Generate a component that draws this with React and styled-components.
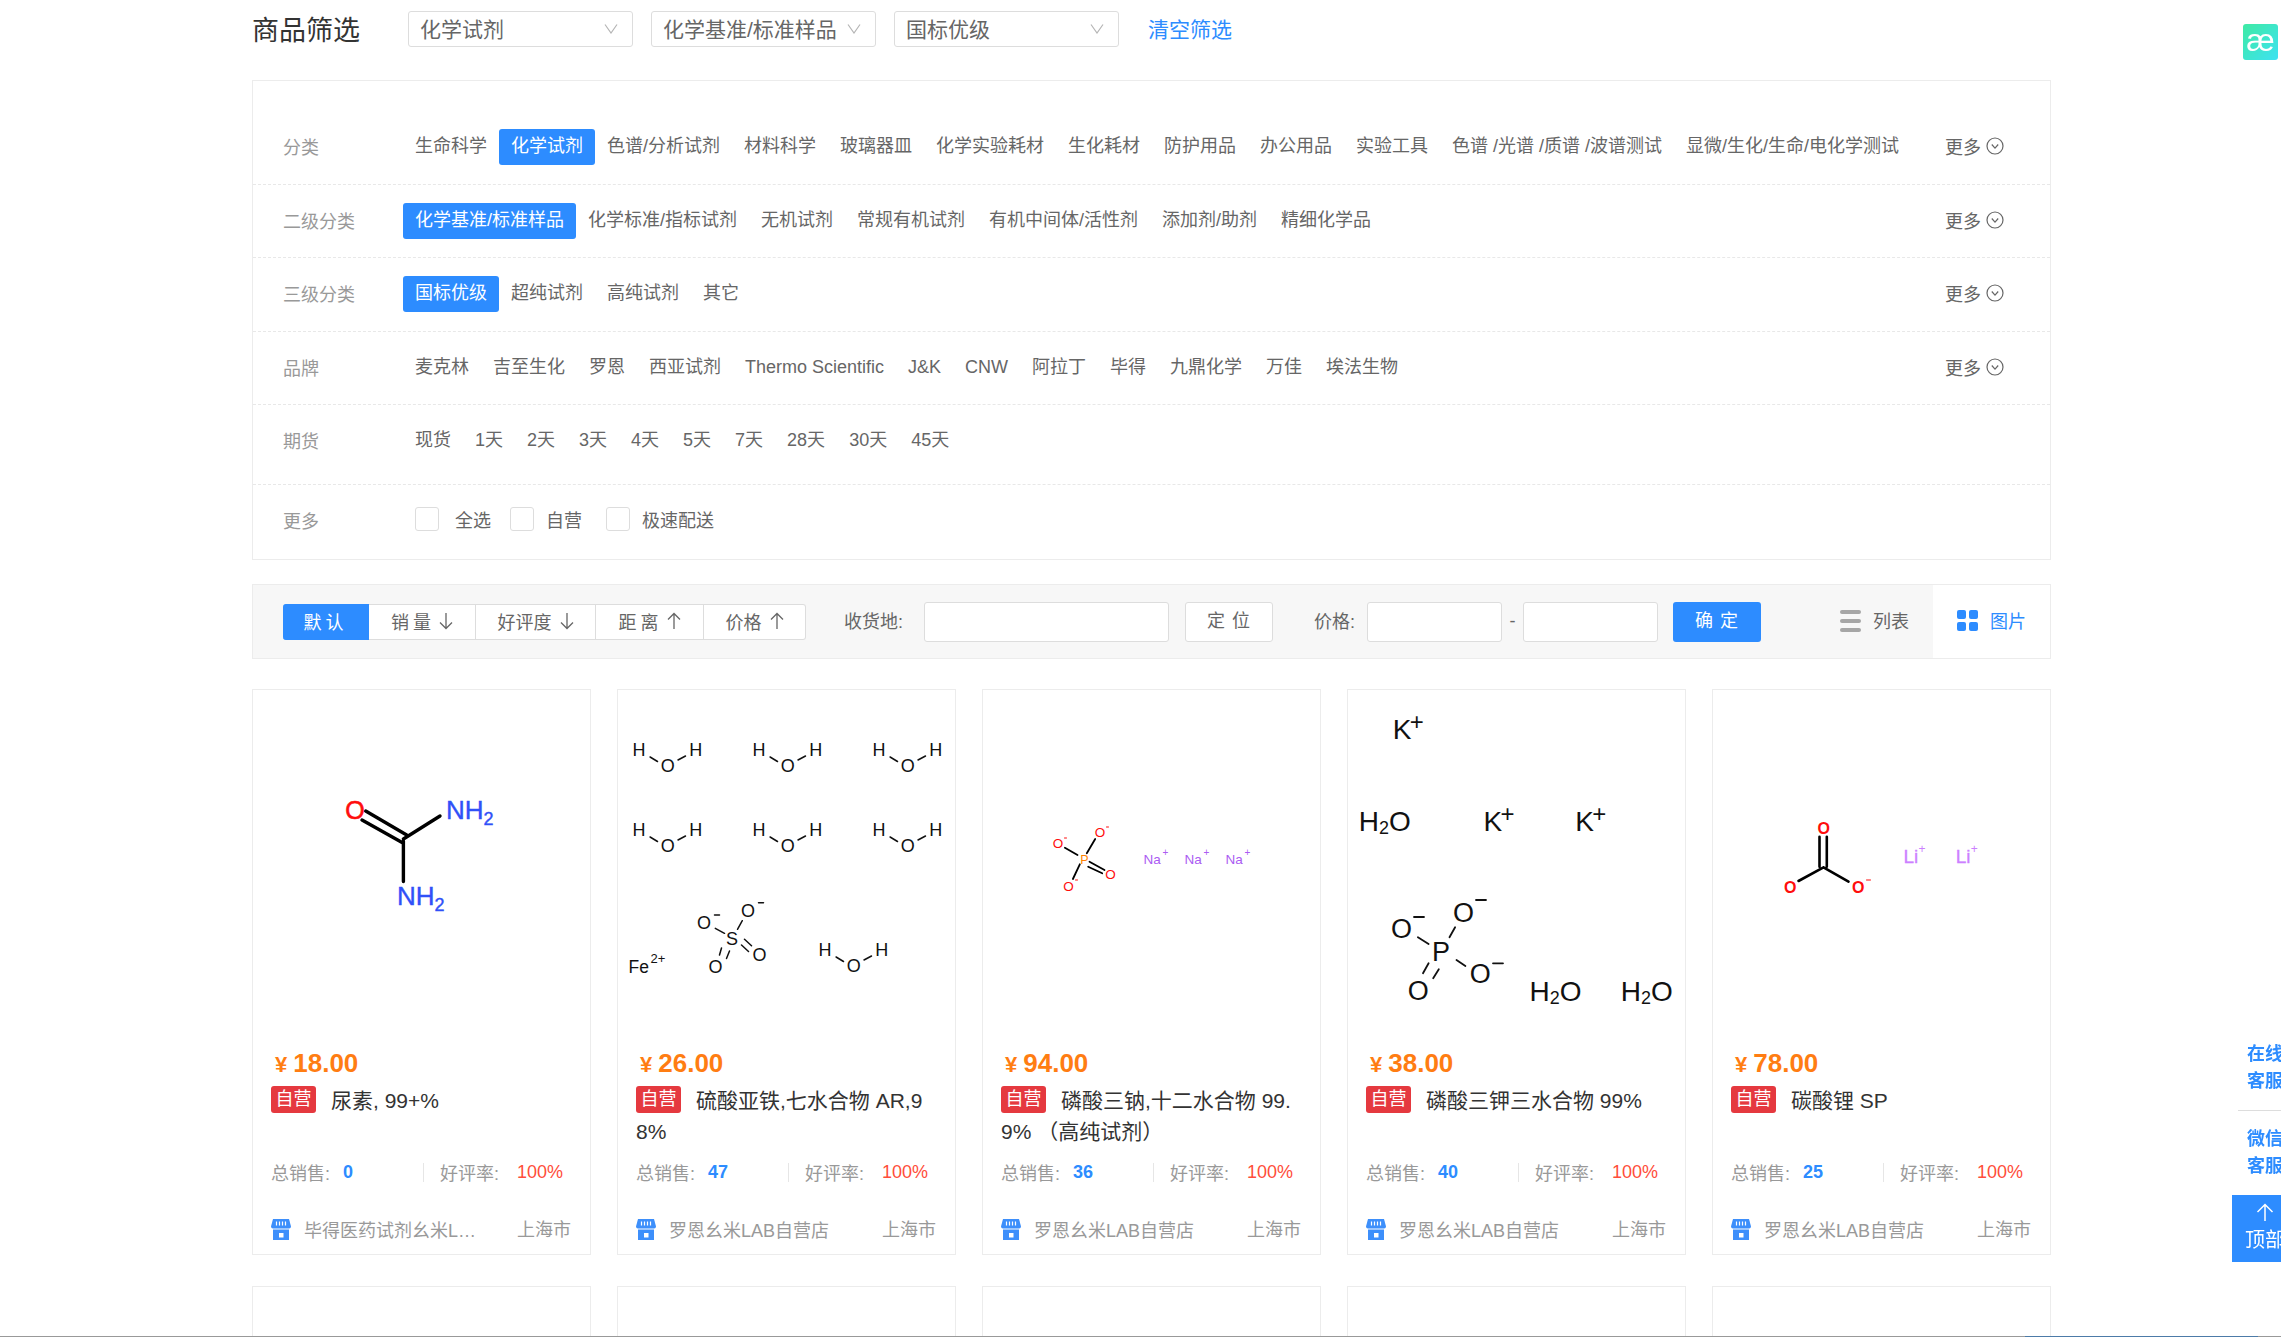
import React from 'react';
import styled, { createGlobalStyle } from 'styled-components';

const BLUE = '#2d8cff';

const GlobalStyle = createGlobalStyle`
  html, body {
    margin: 0;
    height: 100%;
    overflow: hidden;
    background: #fff;
  }
  body {
    font-family: "Liberation Sans", "Noto Sans CJK SC", sans-serif;
    color: #666;
  }
  * {
    box-sizing: border-box;
  }
`;

const categoryRows = [
  {
    label: '分类',
    top: 48,
    bottom: 19,
    active: '化学试剂',
    more: true,
    items: ['生命科学', '化学试剂', '色谱/分析试剂', '材料科学', '玻璃器皿', '化学实验耗材', '生化耗材', '防护用品', '办公用品', '实验工具', '色谱 /光谱 /质谱 /波谱测试', '显微/生化/生命/电化学测试'],
  },
  {
    label: '二级分类',
    top: 18,
    bottom: 18,
    active: '化学基准/标准样品',
    more: true,
    items: ['化学基准/标准样品', '化学标准/指标试剂', '无机试剂', '常规有机试剂', '有机中间体/活性剂', '添加剂/助剂', '精细化学品'],
  },
  {
    label: '三级分类',
    top: 18,
    bottom: 19,
    active: '国标优级',
    more: true,
    items: ['国标优级', '超纯试剂', '高纯试剂', '其它'],
  },
  {
    label: '品牌',
    top: 18,
    bottom: 18,
    more: true,
    items: ['麦克林', '吉至生化', '罗恩', '西亚试剂', 'Thermo Scientific', 'J&K', 'CNW', '阿拉丁', '毕得', '九鼎化学', '万佳', '埃法生物'],
  },
  {
    label: '期货',
    top: 18,
    bottom: 25,
    items: ['现货', '1天', '2天', '3天', '4天', '5天', '7天', '28天', '30天', '45天'],
  },
];

const sortButtons = [
  { text: '默认', width: 86, active: true, spaced: true },
  { text: '销量', width: 107, arrow: 'down', spaced: true },
  { text: '好评度', width: 120, arrow: 'down' },
  { text: '距离', width: 108, arrow: 'up', spaced: true },
  { text: '价格', width: 102, arrow: 'up' },
];

const H2O = ({ x, y, size = 28 }) => (
  <text x={x} y={y} fontSize={size} fill="#111">
    H<tspan fontSize={size * 0.64} dy={size * 0.12}>2</tspan>
    <tspan dy={-size * 0.12}>O</tspan>
  </text>
);

const Atom = ({ x, y, size = 18, fill = '#111', weight, children }) => (
  <text x={x} y={y} fontSize={size} fill={fill} fontWeight={weight} textAnchor="middle">
    {children}
  </text>
);

const Bond = ({ d, width = 1.5, color = '#111' }) => (
  <path d={d} stroke={color} strokeWidth={width} strokeLinecap="round" fill="none" />
);

const Amine = ({ x, y }) => (
  <text x={x} y={y} fontSize={26} fill="#3050f8" stroke="#3050f8" strokeWidth={0.4}>
    NH<tspan fontSize={18} dy={6}>2</tspan>
  </text>
);

const Water = ({ dx = 0, dy = 0 }) => (
  <g transform={`translate(${dx} ${dy})`}>
    <Atom x={639.4} y={756}>H</Atom>
    <Atom x={668.3} y={771.7}>O</Atom>
    <Atom x={696.2} y={756}>H</Atom>
    <Bond d="M650.6 757L658 761.5M686 756L678.5 760" />
  </g>
);

const Urea = () => (
  <MoleculeSvg viewBox="253 690 337 340">
    <text x={355} y={819} fontSize={25} fill="#ff0d0d" stroke="#ff0d0d" strokeWidth={0.6} textAnchor="middle">O</text>
    <Amine x={446} y={819} />
    <Amine x={397} y={905} />
    <Bond width={3.4} color="#000" d="M365.7 811L406.7 835M362 820L403 843M403.4 841V881.5M403.4 839L440 816" />
  </MoleculeSvg>
);

const IronSulfate = () => (
  <MoleculeSvg viewBox="618.5 690 337 340">
    <Water />
    <Water dx={120} />
    <Water dx={240} />
    <Water dy={80} />
    <Water dx={120} dy={80} />
    <Water dx={240} dy={80} />
    <Water dx={186} dy={200} />
    <text x={629} y={972.7} fontSize={17.5} fill="#111">Fe</text>
    <text x={651} y={963} fontSize={13} fill="#111">2+</text>
    <Atom x={732.5} y={945}>S</Atom>
    <Atom x={748.4} y={916.7}>O</Atom>
    <Atom x={704.6} y={929.3}>O</Atom>
    <Atom x={760} y={960.7}>O</Atom>
    <Atom x={716} y={972.7}>O</Atom>
    <Bond d="M759 902.7H764M715 915H720M715.8 928.3L725 933.3M742.8 920.7L738 929.3M745 939.3L752 945.7M742 945L749 951.5M722 948L720 955M730 951L727 958.5" />
  </MoleculeSvg>
);

const SodiumPhosphate = () => (
  <MoleculeSvg viewBox="983.5 690 337 340">
    <Atom x={1085} y={864} size={12.5} fill="#ff8000">P</Atom>
    <Atom x={1100.4} y={837.3} size={13.5} fill="#ff0d0d">O</Atom>
    <Atom x={1058.5} y={848.3} size={13.5} fill="#ff0d0d">O</Atom>
    <Atom x={1111} y={879.3} size={13.5} fill="#ff0d0d">O</Atom>
    <Atom x={1069} y={890.7} size={13.5} fill="#ff0d0d">O</Atom>
    <Bond width={1.8} color="#000" d="M1087.3 853.3L1095.7 839M1078 855L1065.4 847.7M1080.3 864.3L1073.4 879M1090 861.7L1105 870M1088.7 866.7L1102.7 873.3" />
    <Bond width={1} color="#ff0d0d" d="M1107 827H1109M1065 838H1067M1076 880H1078" />
    {[1144, 1185, 1226].map((x) => (
      <g key={x}>
        <text x={x} y={864} fontSize={13.5} fill="#ab5cf2">Na</text>
        <text x={x + 19} y={856} fontSize={10} fill="#ab5cf2">+</text>
      </g>
    ))}
  </MoleculeSvg>
);

const Potassium = ({ x, y }) => (
  <g>
    <text x={x} y={y} fontSize={28} fill="#111">K</text>
    <text x={x + 17} y={y - 9} fontSize={24} fill="#111">+</text>
  </g>
);

const PotassiumPhosphate = () => (
  <MoleculeSvg viewBox="1348 690 337 340">
    <Potassium x={1392.7} y={739.3} />
    <Potassium x={1483.5} y={830.7} />
    <Potassium x={1575.2} y={830.7} />
    <H2O x={1358.7} y={830.7} />
    <H2O x={1529.6} y={1000.7} />
    <H2O x={1620.8} y={1000.7} />
    <Atom x={1441} y={960.7} size={27}>P</Atom>
    <Atom x={1463.5} y={921.7} size={27}>O</Atom>
    <Atom x={1401.6} y={938.3} size={27}>O</Atom>
    <Atom x={1480.2} y={983.3} size={27}>O</Atom>
    <Atom x={1418.3} y={1000} size={27}>O</Atom>
    <Bond width={1.8} d="M1476 900H1486M1414 917H1424M1493 963.3H1503M1417.9 937.3L1428.6 944M1449.5 937.3L1455.1 927.3M1456.5 960L1465.4 966M1428.6 963.3L1423 973.3M1438.8 969.3L1433.2 978.3" />
  </MoleculeSvg>
);

const LithiumCarbonate = () => (
  <MoleculeSvg viewBox="1713.5 690 337 340">
    <Atom x={1824.3} y={833.5} size={16} fill="#ff0d0d" weight="bold">O</Atom>
    <Atom x={1790.7} y={893} size={16} fill="#ff0d0d" weight="bold">O</Atom>
    <Atom x={1858.7} y={893} size={16} fill="#ff0d0d" weight="bold">O</Atom>
    <Bond width={2.6} color="#000" d="M1820 836.7V866.7M1827.3 836.7V866.7M1824 867.3L1799 881M1824 867.3L1849 881.7" />
    <Bond width={1} color="#ff0d0d" d="M1867 880H1871" />
    {[1904, 1956.3].map((x) => (
      <g key={x}>
        <text x={x} y={863.3} fontSize={19} fill="#cc80ff" stroke="#cc80ff" strokeWidth={0.3}>Li</text>
        <text x={x + 15} y={853} fontSize={12} fill="#cc80ff">+</text>
      </g>
    ))}
  </MoleculeSvg>
);

const products = [
  { id: 1, price: '18.00', name: '尿素, 99+%', sales: 0, shop: '毕得医药试剂幺米LAB自营店', Molecule: Urea },
  { id: 2, price: '26.00', name: '硫酸亚铁,七水合物 AR,98%', sales: 47, shop: '罗恩幺米LAB自营店', Molecule: IronSulfate },
  { id: 3, price: '94.00', name: '磷酸三钠,十二水合物 99.9% （高纯试剂）', sales: 36, shop: '罗恩幺米LAB自营店', Molecule: SodiumPhosphate },
  { id: 4, price: '38.00', name: '磷酸三钾三水合物 99%', sales: 40, shop: '罗恩幺米LAB自营店', Molecule: PotassiumPhosphate },
  { id: 5, price: '78.00', name: '碳酸锂 SP', sales: 25, shop: '罗恩幺米LAB自营店', Molecule: LithiumCarbonate },
];

const ChevronDown = () => (
  <svg width="14" height="11" viewBox="0 0 14 11" fill="none">
    <path d="M1 1.5L7 10L13 1.5" stroke="#b5b5b5" strokeWidth="1.2" />
  </svg>
);

const MoreIcon = () => (
  <svg width="18" height="18" viewBox="0 0 18 18" fill="none">
    <circle cx="9" cy="9" r="8" stroke="#666" strokeWidth="1.2" />
    <path d="M5.8 7.5L9 11.2L12.2 7.5" stroke="#666" strokeWidth="1.2" />
  </svg>
);

const SortArrow = ({ dir }) => (
  <svg width="14" height="18" viewBox="0 0 14 18" fill="none">
    {dir === 'down' ? (
      <path d="M7 1V16.5M1 10.5L7 16.5L13 10.5" stroke="#666" strokeWidth="1.3" />
    ) : (
      <path d="M7 17V1.5M1 7.5L7 1.5L13 7.5" stroke="#666" strokeWidth="1.3" />
    )}
  </svg>
);

const ListIcon = () => (
  <svg width="21" height="22" viewBox="0 0 21 22">
    <rect y="0" width="21" height="4" rx="2" fill="#a6a6a6" />
    <rect y="9" width="21" height="4" rx="2" fill="#a6a6a6" />
    <rect y="18" width="21" height="4" rx="2" fill="#a6a6a6" />
  </svg>
);

const GridIcon = () => (
  <svg width="21" height="21" viewBox="0 0 21 21" fill={BLUE}>
    <rect width="9" height="9" rx="2" />
    <rect x="12" width="9" height="9" rx="2" />
    <rect y="12" width="9" height="9" rx="2" />
    <rect x="12" y="12" width="9" height="9" rx="2" />
  </svg>
);

const ShopIcon = () => (
  <svg width="20" height="21" viewBox="0 0 20 21">
    <path d="M2 0H18L20 7.5Q20 9.5 18 9.5H2Q0 9.5 0 7.5Z" fill="#3d8ffb" />
    <path d="M5.5 2.5V6.5M8.5 2.5V6.5M11.5 2.5V6.5M14.5 2.5V6.5" stroke="#fff" strokeWidth="1.2" />
    <path d="M2 10.5H18V21H2Z" fill="#3d8ffb" />
    <rect x="8" y="14" width="4.5" height="4.5" fill="#fff" />
  </svg>
);

const FilterRow = ({ row }) => (
  <Row $top={row.top} $bottom={row.bottom}>
    <RowLabel>{row.label}</RowLabel>
    <Options>
      {row.items.map((item) => (
        <Option key={item} $active={item === row.active}>{item}</Option>
      ))}
    </Options>
    {row.more && (
      <More>
        更多
        <MoreIcon />
      </More>
    )}
  </Row>
);

const ProductCard = ({ product }) => {
  const { Molecule } = product;
  return (
    <Card>
      <Molecule />
      <CardBody>
        <Price>
          <Yen>¥</Yen>
          {product.price}
        </Price>
        <Title>
          <SelfTag>自营</SelfTag>
          {product.name}
        </Title>
        <Stats>
          <StatSales>
            总销售:
            <SalesValue>{product.sales}</SalesValue>
          </StatSales>
          <StatRate>
            好评率:
            <RateValue>100%</RateValue>
          </StatRate>
        </Stats>
        <ShopRow>
          <ShopIcon />
          <ShopName>{product.shop}</ShopName>
          <City>上海市</City>
        </ShopRow>
      </CardBody>
    </Card>
  );
};

const App = () => {
  return (
    <>
      <GlobalStyle />
      <Page>
        <TopBar>
          <PageTitle>商品筛选</PageTitle>
          <SelectGroup>
            {['化学试剂', '化学基准/标准样品', '国标优级'].map((value) => (
              <SelectBox key={value}>
                {value}
                <ChevronDown />
              </SelectBox>
            ))}
          </SelectGroup>
          <ClearLink>清空筛选</ClearLink>
        </TopBar>

        <FilterPanel>
          {categoryRows.map((row) => (
            <FilterRow key={row.label} row={row} />
          ))}
          <Row $top={18} $bottom={20} $last>
            <RowLabel>更多</RowLabel>
            <Checks>
              <CheckItem $gap={16}><CheckBox />全选</CheckItem>
              <CheckItem $right={5}><CheckBox />自营</CheckItem>
              <CheckItem><CheckBox />极速配送</CheckItem>
            </Checks>
          </Row>
        </FilterPanel>

        <Toolbar>
          <SortGroup>
            {sortButtons.map((btn) => (
              <SortButton key={btn.text} $width={btn.width} $active={btn.active} $gap={btn.spaced ? 4 : 8}>
                <SortText $spaced={btn.spaced}>{btn.text}</SortText>
                {btn.arrow && <SortArrow dir={btn.arrow} />}
              </SortButton>
            ))}
          </SortGroup>
          <FieldLabel $left={38}>收货地:</FieldLabel>
          <FieldInput $width={245} $left={21} />
          <GhostButton>定 位</GhostButton>
          <FieldLabel $left={41}>价格:</FieldLabel>
          <FieldInput $width={135} $left={12} />
          <Dash>-</Dash>
          <FieldInput $width={135} />
          <ConfirmButton>确 定</ConfirmButton>
          <ViewTabs>
            <ViewTab>
              <ListIcon />
              <ViewText>列表</ViewText>
            </ViewTab>
            <ViewTab $active>
              <GridIcon />
              <ViewText>图片</ViewText>
            </ViewTab>
          </ViewTabs>
        </Toolbar>

        <ProductGrid>
          {products.map((product) => (
            <ProductCard key={product.id} product={product} />
          ))}
          {products.map((product) => (
            <EmptyCard key={product.id} />
          ))}
        </ProductGrid>
      </Page>

      <LogoBadge>æ</LogoBadge>
      <SideRail>
        <SideLink>在线<br />客服</SideLink>
        <SideDivider />
        <SideLink>微信<br />客服</SideLink>
        <BackTop>
          <svg width="18" height="18" viewBox="0 0 18 18" fill="none">
            <path d="M9 18V1.5M1.5 9L9 1.5L16.5 9" stroke="#fff" strokeWidth="1.5" />
          </svg>
          顶部
        </BackTop>
      </SideRail>
      <BottomEdge />
    </>
  );
};

const Page = styled.div`
  width: 1799px;
  margin-left: 252px;
  padding-top: 11px;
`;

const TopBar = styled.div`
  display: flex;
  align-items: center;
  height: 36px;
`;

const PageTitle = styled.div`
  width: 156px;
  padding-bottom: 2px;
  font-size: 27px;
  color: #333;
  white-space: nowrap;
`;

const SelectGroup = styled.div`
  display: flex;
  gap: 18px;
`;

const SelectBox = styled.div`
  width: 225px;
  height: 36px;
  display: flex;
  align-items: center;
  justify-content: space-between;
  padding: 0 14px 2px 11px;
  border: 1px solid #ddd;
  border-radius: 3px;
  background: #fff;
  font-size: 21px;
  color: #666;
  white-space: nowrap;
`;

const ClearLink = styled.a`
  margin-left: 29px;
  padding-bottom: 2px;
  font-size: 21px;
  color: ${BLUE};
  white-space: nowrap;
`;

const FilterPanel = styled.div`
  margin-top: 33px;
  border: 1px solid #ececec;
`;

const Row = styled.div`
  display: flex;
  align-items: center;
  padding: ${({ $top }) => $top}px 46px ${({ $bottom }) => $bottom}px 30px;
  border-bottom: ${({ $last }) => ($last ? 'none' : '1px dashed #e8e8e8')};
`;

const RowLabel = styled.div`
  width: 120px;
  flex: none;
  padding-bottom: 3px;
  font-size: 18px;
  color: #999;
`;

const Options = styled.div`
  display: flex;
  flex: 1;
  white-space: nowrap;
`;

const Option = styled.span`
  height: 36px;
  line-height: 35px;
  padding: 0 12px;
  border-radius: 3px;
  font-size: 18px;
  color: ${({ $active }) => ($active ? '#fff' : '#666')};
  background: ${({ $active }) => ($active ? BLUE : 'transparent')};
`;

const More = styled.div`
  display: flex;
  align-items: center;
  gap: 5px;
  padding-bottom: 2px;
  font-size: 18px;
  color: #666;
  white-space: nowrap;
`;

const Checks = styled.div`
  display: flex;
  gap: 19px;
  margin-left: 12px;
  height: 36px;
  padding-bottom: 5px;
  align-items: center;
`;

const CheckItem = styled.label`
  display: flex;
  align-items: center;
  gap: ${({ $gap }) => $gap || 12}px;
  margin-right: ${({ $right }) => $right || 0}px;
  font-size: 18px;
  color: #666;
  white-space: nowrap;
`;

const CheckBox = styled.span`
  width: 24px;
  height: 24px;
  border: 1px solid #ddd;
  border-radius: 3px;
  background: #fff;
`;

const Toolbar = styled.div`
  display: flex;
  align-items: center;
  height: 75px;
  margin-top: 24px;
  padding-left: 30px;
  border: 1px solid #ececec;
  background: #f7f7f7;
`;

const SortGroup = styled.div`
  display: flex;
  height: 36px;
  border-radius: 3px;
  background: #fff;
`;

const SortButton = styled.div`
  width: ${({ $width }) => $width}px;
  display: flex;
  align-items: center;
  justify-content: center;
  gap: ${({ $gap }) => $gap}px;
  padding-bottom: 2px;
  font-size: 18px;
  color: ${({ $active }) => ($active ? '#fff' : '#666')};
  background: ${({ $active }) => ($active ? BLUE : '#fff')};
  border: 1px solid ${({ $active }) => ($active ? BLUE : '#ddd')};
  border-left-width: 0;
  &:first-child {
    border-radius: 3px 0 0 3px;
  }
  &:last-child {
    border-radius: 0 3px 3px 0;
  }
`;

const SortText = styled.span`
  letter-spacing: ${({ $spaced }) => ($spaced ? '4px' : '0')};
`;

const FieldLabel = styled.span`
  margin-left: ${({ $left }) => $left}px;
  padding-bottom: 3px;
  font-size: 18px;
  color: #666;
  white-space: nowrap;
`;

const FieldInput = styled.input`
  width: ${({ $width }) => $width}px;
  height: 40px;
  margin-left: ${({ $left }) => $left || 0}px;
  border: 1px solid #ddd;
  border-radius: 3px;
  background: #fff;
  outline: none;
`;

const GhostButton = styled.div`
  width: 88px;
  height: 40px;
  margin-left: 16px;
  line-height: 37px;
  text-align: center;
  letter-spacing: 1px;
  border: 1px solid #ddd;
  border-radius: 3px;
  background: #fff;
  font-size: 18px;
  color: #666;
`;

const Dash = styled.span`
  width: 21px;
  text-align: center;
  font-size: 18px;
  color: #666;
`;

const ConfirmButton = styled.div`
  width: 88px;
  height: 40px;
  margin-left: 15px;
  line-height: 39px;
  text-align: center;
  letter-spacing: 1px;
  border-radius: 3px;
  background: ${BLUE};
  font-size: 18px;
  color: #fff;
`;

const ViewTabs = styled.div`
  display: flex;
  align-self: stretch;
  margin-left: auto;
`;

const ViewTab = styled.div`
  display: flex;
  align-items: center;
  gap: 12px;
  padding: 0 24px 2px;
  font-size: 18px;
  color: ${({ $active }) => ($active ? BLUE : '#666')};
  background: ${({ $active }) => ($active ? '#fff' : 'transparent')};
`;

const ViewText = styled.span`
  padding-bottom: 1px;
`;

const ProductGrid = styled.div`
  display: grid;
  grid-template-columns: repeat(5, 339px);
  column-gap: 26px;
  row-gap: 31px;
  margin-top: 30px;
`;

const Card = styled.div`
  height: 566px;
  border: 1px solid #ececec;
  background: #fff;
`;

const EmptyCard = styled(Card)`
  height: 200px;
`;

const MoleculeSvg = styled.svg`
  display: block;
  width: 337px;
  height: 340px;
  font-family: "Liberation Sans", sans-serif;
`;

const CardBody = styled.div`
  padding: 17px 0 0 18px;
`;

const Price = styled.div`
  height: 32px;
  line-height: 32px;
  padding-left: 4px;
  font-size: 26px;
  font-weight: bold;
  color: #ff7d12;
`;

const Yen = styled.span`
  margin-right: 6px;
  font-size: 22px;
`;

const Title = styled.div`
  width: 295px;
  height: 62px;
  margin-top: 6px;
  font-size: 21px;
  line-height: 31px;
  color: #333;
  word-break: break-all;
`;

const SelfTag = styled.span`
  display: inline-block;
  width: 45px;
  height: 27px;
  line-height: 27px;
  margin-right: 15px;
  border-radius: 3px;
  background: #e5393f;
  color: #fff;
  font-size: 18px;
  text-align: center;
  vertical-align: top;
  position: relative;
  top: 1px;
`;

const Stats = styled.div`
  display: flex;
  align-items: center;
  height: 26px;
  margin-top: 12px;
  font-size: 18px;
  color: #999;
`;

const StatSales = styled.div`
  width: 153px;
  height: 19px;
  display: flex;
  align-items: center;
  border-right: 1px solid #e6e6e6;
  white-space: nowrap;
`;

const SalesValue = styled.span`
  margin-left: 13px;
  font-weight: bold;
  color: ${BLUE};
`;

const StatRate = styled.div`
  display: flex;
  align-items: center;
  margin-left: 16px;
  white-space: nowrap;
`;

const RateValue = styled.span`
  margin-left: 18px;
  color: #ff4d3a;
`;

const ShopRow = styled.div`
  display: flex;
  align-items: center;
  height: 26px;
  margin-top: 31px;
  padding-right: 19px;
  font-size: 18px;
  color: #999;
`;

const ShopName = styled.span`
  width: 173px;
  margin-left: 13px;
  overflow: hidden;
  white-space: nowrap;
  text-overflow: ellipsis;
`;

const City = styled.span`
  margin-left: auto;
  padding-bottom: 2px;
  white-space: nowrap;
`;

const LogoBadge = styled.div`
  position: fixed;
  top: 24px;
  right: 3px;
  width: 35px;
  height: 36px;
  border-radius: 3px;
  background: linear-gradient(135deg, #3eeaa4, #3ee2f2);
  color: #fff;
  font-size: 32px;
  line-height: 32px;
  text-align: center;
`;

const SideRail = styled.div`
  position: fixed;
  top: 1041px;
  right: -17px;
  width: 66px;
  display: flex;
  flex-direction: column;
  align-items: center;
`;

const SideLink = styled.div`
  font-size: 18px;
  line-height: 27px;
  font-weight: bold;
  color: ${BLUE};
`;

const SideDivider = styled.div`
  width: 55px;
  height: 1px;
  margin: 15px 0;
  background: #ddd;
`;

const BackTop = styled.div`
  width: 66px;
  height: 67px;
  margin-top: 15px;
  padding-top: 8px;
  display: flex;
  flex-direction: column;
  align-items: center;
  gap: 3px;
  background: ${BLUE};
  color: #fff;
  font-size: 20px;
  white-space: nowrap;
`;

const BottomEdge = styled.div`
  position: fixed;
  left: 0;
  right: 0;
  bottom: 0;
  height: 1px;
  background: #999;
  &::after {
    content: '';
    position: absolute;
    left: 2025px;
    width: 233px;
    top: 0;
    bottom: 0;
    background: #4d7ba8;
  }
`;

export default App;
